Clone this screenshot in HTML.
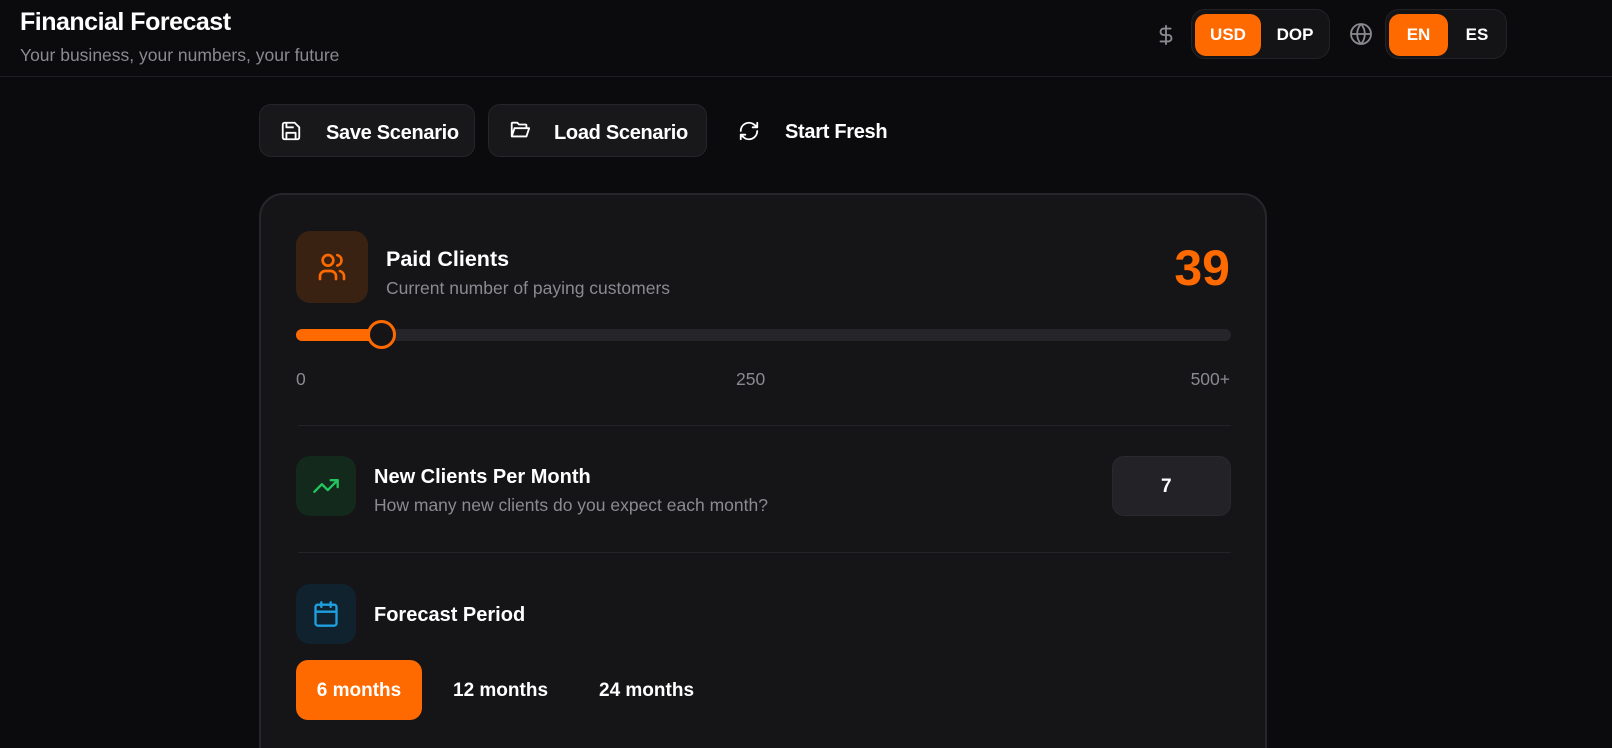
<!DOCTYPE html>
<html style="width:1612px;height:748px;overflow:hidden"><head><meta charset="utf-8"><style>
*{box-sizing:border-box;margin:0;padding:0}
body{width:1612px;height:748px;overflow:hidden;background:#0b0b0d;font-family:"Liberation Sans",sans-serif;color:#fff;position:relative}
.hdr{position:absolute;left:0;top:0;width:1612px;height:77px;border-bottom:1px solid #1f1f23}
.abs{position:absolute}
.t1{left:20px;top:8px;font-size:25px;font-weight:bold;letter-spacing:-0.5px}
.t2{left:20px;top:45px;font-size:17.5px;color:#8a8a90}
.grp{position:absolute;top:9px;height:50px;border:1px solid #232327;background:#141417;border-radius:14px}
.btn{position:absolute;top:4px;height:42px;border-radius:11px;font-weight:bold;font-size:17px;display:flex;align-items:center;justify-content:center}
.on{background:#ff6a00}
.ab{position:absolute;top:104px;height:53px;border:1px solid #26262a;background:#18181b;border-radius:12px}
.abt{position:absolute;font-size:20px;font-weight:bold;top:17px;letter-spacing:-0.3px}
.card{position:absolute;left:259px;top:193px;width:1008px;height:580px;background:#151518;border:2px solid #27272b;border-radius:24px}
.ib{position:absolute;border-radius:14px;display:flex;align-items:center;justify-content:center}
.h{position:absolute;font-size:21.5px;font-weight:bold}
.s{position:absolute;font-size:17.5px;color:#8a8a90}
.div{position:absolute;left:37px;width:933px;height:1px;background:#242428}
</style></head><body>
<div class="hdr"></div>
<div class="abs t1">Financial Forecast</div>
<div class="abs t2">Your business, your numbers, your future</div>
<svg class="abs" style="left:1155px;top:22px" width="22" height="26" viewBox="0 0 24 24" fill="none" stroke="#8a8a90" stroke-width="2" stroke-linecap="round"><path d="M12 2v20M17 5H9.5a3.5 3.5 0 0 0 0 7h5a3.5 3.5 0 0 1 0 7H6"/></svg>
<div class="grp" style="left:1191px;width:139px"><div class="btn on" style="left:3px;width:66px">USD</div><div class="btn" style="left:72px;width:62px">DOP</div></div>
<svg class="abs" style="left:1349px;top:22px" width="24" height="24" viewBox="0 0 24 24" fill="none" stroke="#8a8a90" stroke-width="1.8"><circle cx="12" cy="12" r="10"/><path d="M2 12h20M12 2a15 15 0 0 1 0 20M12 2a15 15 0 0 0 0 20"/></svg>
<div class="grp" style="left:1385px;width:122px"><div class="btn on" style="left:3px;width:59px">EN</div><div class="btn" style="left:64px;width:54px">ES</div></div>

<div class="ab" style="left:259px;width:216px"><svg class="abs" style="left:20px;top:15px" width="22" height="22" viewBox="0 0 24 24" fill="none" stroke="#fff" stroke-width="2" stroke-linejoin="round"><path d="M5 3h11l5 5v11a2 2 0 0 1-2 2H5a2 2 0 0 1-2-2V5a2 2 0 0 1 2-2z"/><path d="M7 21v-7h10v7M7 3v5h8"/></svg><div class="abt" style="left:66px">Save Scenario</div></div>
<div class="ab" style="left:488px;width:219px"><svg class="abs" style="left:20px;top:14px" width="22" height="22" viewBox="0 0 24 24" fill="none" stroke="#fff" stroke-width="2" stroke-linejoin="round"><path d="M3 19V5a1 1 0 0 1 1-1h5l2 2h7a1 1 0 0 1 1 1v3M3 19l3-9h16l-3 9z"/></svg><div class="abt" style="left:65px">Load Scenario</div></div>
<svg class="abs" style="left:738px;top:120px" width="22" height="22" viewBox="0 0 24 24" fill="none" stroke="#fff" stroke-width="2" stroke-linecap="round" stroke-linejoin="round"><path d="M3 12a9 9 0 0 1 15-6.7L21 8M21 3v5h-5M21 12a9 9 0 0 1-15 6.7L3 16M3 21v-5h5"/></svg>
<div class="abs abt" style="left:785px;top:121px">Start Fresh</div>

<div class="card">
<div class="ib" style="left:35px;top:36px;width:72px;height:72px;background:#3a2213"><svg width="32" height="32" viewBox="0 0 24 24" fill="none" stroke="#ff6a00" stroke-width="2" stroke-linecap="round"><circle cx="9" cy="7" r="4"/><path d="M3 21v-2a4 4 0 0 1 4-4h4a4 4 0 0 1 4 4v2M16 3.1a4 4 0 0 1 0 7.8M21 21v-2a4 4 0 0 0-3-3.9"/></svg></div>
<div class="h" style="left:125px;top:52px">Paid Clients</div>
<div class="s" style="left:125px;top:83px">Current number of paying customers</div>
<div class="abs" style="right:35px;top:44px;font-size:50px;font-weight:bold;color:#ff6a00">39</div>
<div class="abs" style="left:35px;top:134px;width:935px;height:12px;border-radius:6px;background:#26262a"></div>
<div class="abs" style="left:35px;top:134px;width:88px;height:12px;border-radius:6px;background:#ff6a00"></div>
<div class="abs" style="left:106px;top:125px;width:29px;height:29px;border-radius:50%;background:#151518;border:3px solid #ff6a00"></div>
<div class="s" style="left:35px;top:174px">0</div>
<div class="s" style="left:475px;top:174px">250</div>
<div class="s" style="right:35px;top:174px">500+</div>
<div class="div" style="top:230px"></div>
<div class="ib" style="left:35px;top:261px;width:60px;height:60px;background:#13291b"><svg width="28" height="28" viewBox="0 0 24 24" fill="none" stroke="#22c55e" stroke-width="2" stroke-linecap="round" stroke-linejoin="round"><path d="M22 7l-8.5 8.5-5-5L2 17M16 7h6v6"/></svg></div>
<div class="h" style="left:113px;top:271px;font-size:20px">New Clients Per Month</div>
<div class="s" style="left:113px;top:300px">How many new clients do you expect each month?</div>
<div class="abs" style="left:851px;top:261px;width:119px;height:60px;border-radius:12px;background:#232327;border:1px solid #2a2a2e;font-size:19px;font-weight:bold;padding:19px 0 0 48px">7</div>
<div class="div" style="top:357px"></div>
<div class="ib" style="left:35px;top:389px;width:60px;height:60px;background:#10222d"><svg width="28" height="28" viewBox="0 0 24 24" fill="none" stroke="#1ea0e0" stroke-width="2" stroke-linecap="round"><rect x="3" y="4" width="18" height="18" rx="2"/><path d="M16 2v4M8 2v4M3 10h18"/></svg></div>
<div class="h" style="left:113px;top:409px;font-size:20px">Forecast Period</div>
<div class="abs" style="left:35px;top:465px;width:126px;height:60px;border-radius:12px;background:#ff6a00;font-size:19px;font-weight:bold;padding-top:20px;text-align:center">6 months</div>
<div class="abs" style="left:192px;top:485px;font-size:19px;font-weight:bold">12 months</div>
<div class="abs" style="left:338px;top:485px;font-size:19px;font-weight:bold">24 months</div>
</div>
</body></html>
